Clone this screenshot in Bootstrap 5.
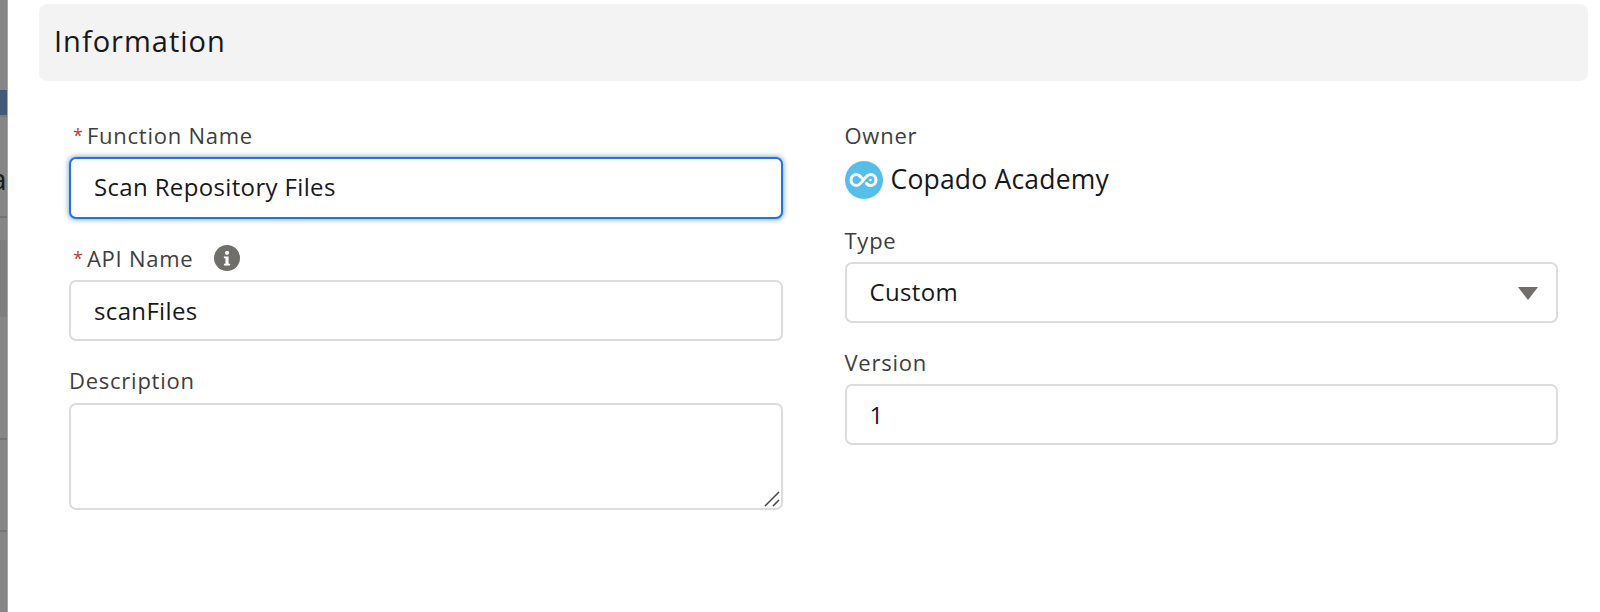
<!DOCTYPE html>
<html lang="en">
<head>
<meta charset="utf-8">
<title>Information</title>
<link href="https://cdn.jsdelivr.net/npm/bootstrap@5.3.0/dist/css/bootstrap.min.css" rel="stylesheet">
<style>
html,body{height:612px;overflow:hidden;background:#fff}
body{font-family:"Open Sans","Liberation Sans",sans-serif;color:#181818}
.shell{height:612px}
.backdrop{width:8px;flex:none;background:#868686;border-right:1px solid #a6a6a6;overflow:hidden;position:relative}
.bd-band{height:25px;margin-top:90px;background:#43597a;border-bottom:2px solid #7b7b7b;box-sizing:content-box}
.bd-line{border-top:2px solid #757575}
.bd-a{position:absolute;left:-10px;top:161px;font-size:30px;line-height:36px;color:#1c1c1c}
.bd-s1{height:99px;border:0}
.bd-s2{height:24px}
.bd-s3{height:77px;background:#7e7e7e;border:0}
.bd-s4{height:121px;border:0}
.bd-s5{height:92px}
.bd-s6{height:82px}
.panel-main{padding:4px 12px 0 31px}
.sec-head{height:77px;background:#f3f3f3;border-radius:8px;padding-left:15px;font-size:29px;letter-spacing:1px;line-height:74px;color:#181818}
.fields{padding:0 30px 0 30px;margin-top:40px;column-gap:62px}
.fcol{flex:1 1 0;min-width:0}
.flabel{font-size:22px;letter-spacing:.75px;line-height:28px;color:#3e3e3c;margin-bottom:8px;display:flex;align-items:center}
.flabel-desc{margin-bottom:9px}
.req{color:#c23934;margin-right:4px;font-size:18px;line-height:18px;margin-left:4px;letter-spacing:0}
.finput{height:61px;border:2px solid #dcdcdc;border-radius:7px;padding:0 23px;font-size:24px;letter-spacing:.35px;color:#181818;line-height:1.2;width:100%;box-shadow:none}
.finput-on{height:62px;padding-bottom:4px;border-color:#1b76e4;box-shadow:0 0 5px 1px rgba(1,83,180,.45)}
.fblock{margin-bottom:25.4px}
.fblock-tight{margin-bottom:24.4px}
.farea{height:107px;resize:none}
.area-wrap{position:relative}
.grip{position:absolute;right:2px;bottom:2px}
.info-dot{margin-left:21px;width:26px;height:26px}
.owner{height:38px;font-size:26.5px;letter-spacing:.2px;margin-bottom:26.5px;margin-top:12px}
.owner svg{margin-right:8px}
.caret-wrap{position:relative}
.caret-ico{position:absolute;right:20px;top:25px}
.type-sel{background-image:none;appearance:none}
</style>
</head>
<body>
<div class="d-flex shell">
  <div class="backdrop">
    <div class="bd-band"></div>
    <div class="bd-a">a</div>
    <div class="bd-s1"></div><div class="bd-line bd-s2"></div><div class="bd-s3"></div><div class="bd-s4"></div><div class="bd-line bd-s5"></div><div class="bd-line bd-s6"></div>
  </div>
  <div class="flex-grow-1 panel-main">
    <div class="sec-head">Information</div>
    <div class="d-flex fields">
      <div class="fcol">
        <div class="fblock">
          <div class="flabel"><span class="req">*</span>Function Name</div>
          <input class="form-control finput finput-on" value="Scan Repository Files">
        </div>
        <div class="fblock fblock-tight">
          <div class="flabel"><span class="req">*</span>API Name
            <svg class="info-dot" viewBox="0 0 25 25"><circle cx="12.5" cy="12.5" r="12.5" fill="#706e6b"/><circle cx="12.5" cy="7.5" r="2" fill="#fff"/><path d="M9.5 11h4.5v7h1.5v1.8h-6V18h1.5v-5.2H9.500z" fill="#fff"/></svg>
          </div>
          <input class="form-control finput" value="scanFiles">
        </div>
        <div class="fblock">
          <div class="flabel flabel-desc">Description</div>
          <div class="area-wrap">
            <textarea class="form-control finput farea"></textarea>
            <svg class="grip" width="18" height="18" viewBox="0 0 18 18"><path d="M2 16 16 2M10 16l6-6" stroke="#444" stroke-width="1.500" fill="none"/></svg>
          </div>
        </div>
      </div>
      <div class="fcol">
        <div class="flabel">Owner</div>
        <div class="d-flex align-items-center owner">
          <svg width="38" height="38" viewBox="0 0 38 38"><circle cx="19" cy="19" r="19" fill="#55bfe9"/><path d="M18.500 19c-2.500-3.500-4.500-5.500-7-5.500a5.500 5.500 0 0 0 0 11c2.500 0 4.500-2 7-5.500s4.500-5.500 7-5.500a5.500 5.500 0 0 1 0 11c-1.500 0-3-.7-4-2" fill="none" stroke="#fff" stroke-width="3" stroke-linecap="round"/><circle cx="25.500" cy="19" r="1.300" fill="#fff"/></svg>
          <span>Copado Academy</span>
        </div>
        <div class="fblock">
          <div class="flabel">Type</div>
          <div class="caret-wrap">
            <select class="form-select finput type-sel"><option>Custom</option></select>
            <svg class="caret-ico" width="20" height="14" viewBox="0 0 20 14"><path d="M0 0h20L10 13z" fill="#706e6b"/></svg>
          </div>
        </div>
        <div class="fblock">
          <div class="flabel">Version</div>
          <input class="form-control finput" value="1">
        </div>
      </div>
    </div>
  </div>
</div>
</body>
</html>
